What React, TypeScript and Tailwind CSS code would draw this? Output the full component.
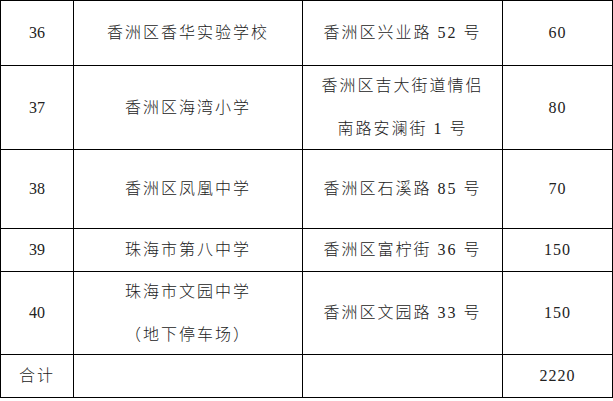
const rows = [
  { no: "36", name: ["香洲区香华实验学校"], addr: ["香洲区兴业路 52 号"], num: "60", h: "h-[65px]" },
  { no: "37", name: ["香洲区海湾小学"], addr: ["香洲区吉大街道情侣", "南路安澜街 1 号"], num: "80", h: "h-[84px]" },
  { no: "38", name: ["香洲区凤凰中学"], addr: ["香洲区石溪路 85 号"], num: "70", h: "h-[79px]" },
  { no: "39", name: ["珠海市第八中学"], addr: ["香洲区富柠街 36 号"], num: "150", h: "h-[43px]" },
  { no: "40", name: ["珠海市文园中学", "（地下停车场）"], addr: ["香洲区文园路 33 号"], num: "150", h: "h-[83px]" },
]

function Lines({ items }: { items: string[] }) {
  return (
    <div className="flex flex-col items-center gap-[19px]">
      {items.map((t) => (
        <span key={t} className="leading-[24px]">{t}</span>
      ))}
    </div>
  )
}

export default function App() {
  return (
    <div className="w-[613px] h-[401px] bg-white overflow-hidden">
      <table className="table-fixed border-collapse w-[612px] text-[16px] text-[#222] font-light font-['Liberation_Serif','Noto_Sans_CJK_SC',serif]">
        <colgroup>
          <col className="w-[73px]" />
          <col className="w-[229px]" />
          <col className="w-[200px]" />
          <col className="w-[110px]" />
        </colgroup>
        <tbody>
          {rows.map((r) => (
            <tr key={r.no} className={r.h}>
              <td className="border border-black text-center p-0">{r.no}</td>
              <td className="border border-black text-center p-0 tracking-[2px]">
                <Lines items={r.name} />
              </td>
              <td className="border border-black text-center p-0 tracking-[2px]">
                <Lines items={r.addr} />
              </td>
              <td className="border border-black text-center p-0 tracking-[1px]">{r.num}</td>
            </tr>
          ))}
          <tr className="h-[43px]">
            <td className="border border-black text-center p-0 tracking-[2px]">合计</td>
            <td className="border border-black p-0"></td>
            <td className="border border-black p-0"></td>
            <td className="border border-black text-center p-0 tracking-[1px]">2220</td>
          </tr>
        </tbody>
      </table>
    </div>
  )
}
